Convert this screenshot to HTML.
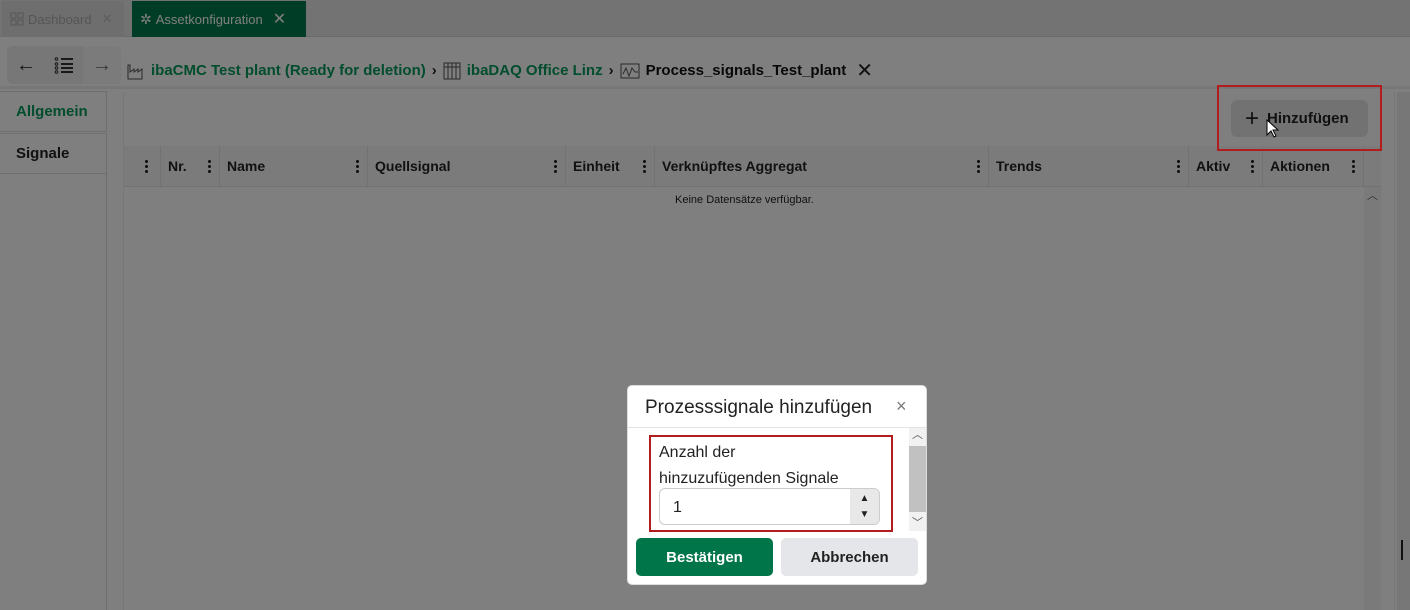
<!DOCTYPE html>
<html><head><meta charset="utf-8">
<style>
*{box-sizing:border-box;margin:0;padding:0}
html,body{width:1410px;height:610px;overflow:hidden}
body{background:#fff;font-family:"Liberation Sans","DejaVu Sans",sans-serif;color:#222;position:relative}
.abs{position:absolute}
.top{left:0;top:0;width:1410px;height:37px;background:#e6e6e6;border-bottom:1px solid #d4d4d4}
.tab{top:1px;height:36px;display:flex;align-items:center;font-size:13px;padding:0 8px;gap:4px}
.crumb{top:38px;left:0;width:1410px;height:51px;background:#fff;border-bottom:3px solid #eee}
.navg{left:7px;top:46px;width:114px;height:38px;background:#eee;border-radius:6px}
.bc{top:58px;font-size:15px;font-weight:bold;display:flex;align-items:center;gap:6px}
.green{color:#049a5c}
.ltab{left:0;width:107px;height:41px;border:1px solid #dedede;border-left:none;font-size:15px;font-weight:bold;display:flex;align-items:center;padding-left:16px}
.panel{left:123px;top:92px;width:1272px;height:518px;border-left:1px solid #ececec;border-right:1px solid #ececec}
.thead{left:124px;top:146px;width:1240px;height:41px;background:#f6f6f6;border-bottom:1px solid #e4e4e4}
.th{position:absolute;top:0;height:40px;border-right:1px solid #e4e4e4;font-size:14px;font-weight:bold;display:flex;align-items:center;padding-left:7px}
.dots{position:absolute;right:8px;top:13px;width:3px;height:14px;background:radial-gradient(circle,#222 1.4px,transparent 1.6px) 0 0/3px 5px repeat-y}
.ov{left:0;top:0;width:1410px;height:610px;background:rgba(0,0,0,0.5)}
.dlg{left:627px;top:385px;width:300px;height:200px;background:#fff;border-radius:5px;border:1px solid #ddd}
.btn{top:538px;height:38px;border-radius:5px;font-size:15px;font-weight:bold;display:flex;align-items:center;justify-content:center}
</style></head><body>
<div class="abs top"></div>
<div class="abs tab" style="left:2px;width:122px;background:#dcdcdc;color:#aaa">
<svg width="14" height="14"><rect x="1" y="1" width="5" height="5" fill="none" stroke="#aaa"/><rect x="8" y="1" width="5" height="5" fill="none" stroke="#aaa"/><rect x="1" y="8" width="5" height="5" fill="none" stroke="#aaa"/><rect x="8" y="8" width="5" height="5" fill="none" stroke="#aaa"/></svg>Dashboard <span style="margin-left:6px;color:#bbb">✕</span></div>
<div class="abs tab" style="left:132px;width:174px;background:#007a4d;color:#fff">
<span style="font-size:14px">✲</span>Assetkonfiguration <span style="margin-left:6px;font-size:16px">✕</span></div>
<div class="abs crumb"></div>
<div class="abs navg"></div>
<div class="abs" style="left:83px;top:46px;width:38px;height:38px;background:#f6f6f6;border-radius:0 6px 6px 0"></div>
<div class="abs" style="left:16px;top:54px;font-size:20px;color:#333">←</div>
<svg class="abs" style="left:54px;top:57px" width="20" height="17"><g stroke="#333" stroke-width="2"><line x1="7" y1="2" x2="19" y2="2"/><line x1="7" y1="7" x2="19" y2="7"/><line x1="7" y1="11" x2="19" y2="11"/><line x1="7" y1="15" x2="19" y2="15"/></g><g fill="none" stroke="#333"><circle cx="2.5" cy="2" r="1.3"/><circle cx="2.5" cy="7" r="1.3"/><circle cx="2.5" cy="11" r="1.3"/><circle cx="2.5" cy="15" r="1.3"/></g></svg>
<div class="abs" style="left:92px;top:54px;font-size:20px;color:#777">→</div>
<div class="abs bc" style="left:127px">
<svg width="18" height="18"><path d="M1 17V3h2v7l4-3v3l4-3v3l4-3v10z" fill="none" stroke="#555"/></svg>
<span class="green">ibaCMC Test plant (Ready for deletion)</span><span>›</span>
<svg width="18" height="18"><rect x="1" y="1" width="16" height="16" fill="none" stroke="#555"/><path d="M5 1v16M9 1v16M13 1v16M1 5h16" stroke="#555"/></svg>
<span class="green">ibaDAQ Office Linz</span><span>›</span>
<svg width="20" height="18"><rect x="1" y="2" width="18" height="14" fill="none" stroke="#555"/><path d="M3 12l3-6 3 8 3-8 3 4h3" fill="none" stroke="#555"/></svg>
<span style="color:#111">Process_signals_Test_plant</span><span style="font-weight:normal;font-size:20px;margin-left:4px">✕</span></div>
<div class="abs ltab green" style="top:91px">Allgemein</div>
<div class="abs ltab" style="top:133px;height:41px">Signale</div>
<div class="abs" style="left:0;top:174px;width:107px;height:436px;border-right:1px solid #dedede"></div>
<div class="abs panel"></div>
<div class="abs" style="left:1231px;top:100px;width:137px;height:37px;background:#e5e5e5;border-radius:6px;font-size:15px;font-weight:bold;display:flex;align-items:center;padding-left:14px;gap:8px"><span style="font-size:24px;font-weight:normal;line-height:1">+</span>Hinzufügen</div>
<div class="abs thead">
<div class="th" style="left:0;width:37px"><span class="dots" style="right:12px"></span></div>
<div class="th" style="left:37px;width:59px">Nr.<span class="dots"></span></div>
<div class="th" style="left:96px;width:148px">Name<span class="dots"></span></div>
<div class="th" style="left:244px;width:198px">Quellsignal<span class="dots"></span></div>
<div class="th" style="left:442px;width:89px">Einheit<span class="dots"></span></div>
<div class="th" style="left:531px;width:334px">Verknüpftes Aggregat<span class="dots"></span></div>
<div class="th" style="left:865px;width:200px">Trends<span class="dots"></span></div>
<div class="th" style="left:1065px;width:74px">Aktiv<span class="dots"></span></div>
<div class="th" style="left:1139px;width:101px">Aktionen<span class="dots"></span></div>
</div>
<div class="abs" style="left:1364px;top:146px;width:17px;height:41px;background:#f6f6f6;border-bottom:1px solid #e4e4e4"></div>
<div class="abs" style="left:1364px;top:187px;width:17px;height:423px;background:#f4f4f4;font-size:11px;text-align:center;color:#666">︿</div>
<div class="abs" style="left:1397px;top:92px;width:13px;height:518px;background:#eee"></div>
<div class="abs" style="left:675px;top:194px;font-size:11px;color:#222">Keine Datensätze verfügbar.</div>

<div class="abs ov"></div>

<div class="abs" style="left:1401px;top:540px;width:2px;height:20px;background:#111"></div>
<svg class="abs" style="left:1266px;top:119px" width="14" height="20"><path d="M1 1v15l4-4 3 6 2-1-3-6h5z" fill="#fff" stroke="#000"/></svg>
<div class="abs" style="left:1217px;top:85px;width:165px;height:66px;border:2px solid #b21c1c"></div>

<div class="abs dlg">
<div class="abs" style="left:17px;top:11px;font-size:19px;color:#222">Prozesssignale hinzufügen</div>
<div class="abs" style="left:268px;top:10px;font-size:18px;color:#777">×</div>
<div class="abs" style="left:0;top:41px;width:298px;height:1px;background:#e2e2e2"></div>
<div class="abs" style="left:281px;top:42px;width:17px;height:103px;background:#f1f1f1"></div>
<div class="abs" style="left:281px;top:60px;width:17px;height:66px;background:#c1c1c1"></div>
<div class="abs" style="left:284px;top:40px;font-size:11px;color:#555">︿</div>
<div class="abs" style="left:284px;top:128px;font-size:11px;color:#555">﹀</div>
<div class="abs" style="left:21px;top:49px;width:244px;height:97px;border:2px solid #b21c1c"></div>
<div class="abs" style="left:31px;top:54px;font-size:16px;line-height:26px;color:#222">Anzahl der<br>hinzuzufügenden Signale</div>
<div class="abs" style="left:31px;top:102px;width:221px;height:37px;border:1px solid #ccc;border-radius:6px;font-size:16px;padding:10px 0 0 13px">1</div>
<div class="abs" style="left:222px;top:103px;width:29px;height:35px;background:#e8e8e8;border-radius:0 5px 5px 0;font-size:10px;text-align:center;line-height:16px;padding-top:2px">▲<br>▼</div>
</div>
<div class="abs btn" style="left:636px;width:137px;background:#00754a;color:#fff">Bestätigen</div>
<div class="abs btn" style="left:781px;width:137px;background:#e4e6ea;color:#222">Abbrechen</div>
</body></html>
